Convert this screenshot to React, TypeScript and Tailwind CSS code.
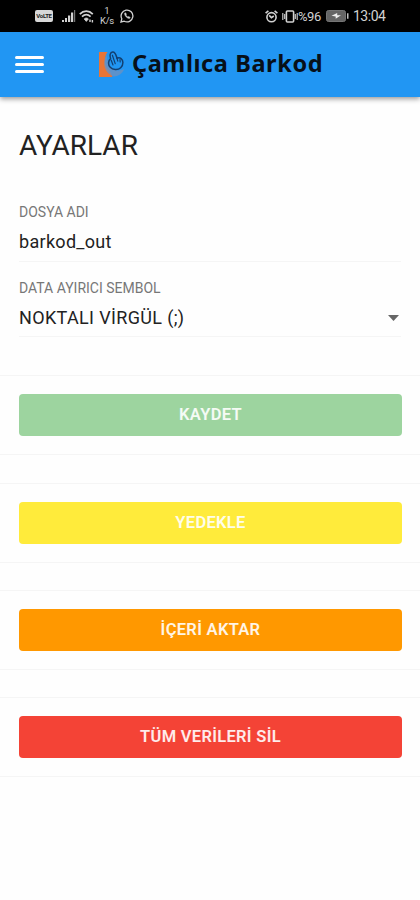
import React from "react";

function StatusBar() {
  return (
    <div className="flex h-8 items-center bg-black pr-[34px] pl-[35px] text-[#d2d2d2]">
      <div className="flex h-[12px] w-[18px] items-center justify-center overflow-hidden rounded-[2px] bg-[#d8d8d8] text-[6px] leading-none font-bold tracking-[-0.3px] text-[#222]">
        VoLTE
      </div>
      <svg className="ml-[9px]" width="14" height="12" viewBox="0 0 14 12" fill="currentColor">
        <rect x="0" y="10" width="2" height="2" />
        <rect x="3" y="8" width="2" height="4" />
        <rect x="6" y="5.5" width="2.2" height="6.5" />
        <rect x="9" y="2.5" width="2.2" height="9.5" />
        <rect x="12" y="0" width="1.2" height="12" opacity="0.55" />
      </svg>
      <svg className="ml-[3px]" width="16" height="13" viewBox="0 0 16 13" fill="none" stroke="currentColor" strokeWidth="1.7">
        <path d="M0.8 4.2C4.6 0.2 10 0.2 13.8 4.2" />
        <path d="M3 6.7C5.8 4 8.8 4 11.6 6.7" />
        <path d="M5.2 8.9C6.6 7.7 8 7.7 9.4 8.9L7.3 11.4Z" fill="currentColor" strokeWidth="0.8" />
        <path d="M11 9.5V12M13.4 10V12.4" strokeWidth="1.4" />
      </svg>
      <div className="ml-[5px] flex w-[14px] flex-col items-center text-[9.5px] leading-[10px]">
        <span>1</span>
        <span className="tracking-[-0.3px]">K/s</span>
      </div>
      <svg className="ml-[6px]" width="14" height="14" viewBox="0 0 14 14" fill="none" stroke="currentColor">
        <path d="M1 13L1.8 9.8A5.9 5.9 0 1 1 4.2 12.2Z" strokeWidth="1.3" />
        <path d="M4.7 4.1C4 5.8 6.7 9.5 9.4 9.6L10.2 8.4L8.7 7.6L7.8 8.1L6 6.2L6.4 5.2L5.6 3.8Z" fill="currentColor" strokeWidth="0.5" />
      </svg>
      <div className="flex-1" />
      <svg width="13" height="13" viewBox="0 0 13 13" fill="none" stroke="currentColor" strokeWidth="1.6">
        <circle cx="6.5" cy="7.2" r="4.6" />
        <path d="M0.6 3.2L3.4 0.8M12.4 3.2L9.6 0.8M4.2 5.4L6.4 7.6L8.8 6" />
      </svg>
      <svg className="ml-[4px]" width="16" height="13" viewBox="0 0 16 13" fill="none" stroke="currentColor" strokeWidth="1.6">
        <rect x="4.4" y="1" width="7.2" height="11" rx="1" />
        <path d="M0.8 3V10M2.7 4V9M13.3 4V9M15.2 3V10" strokeWidth="1.1" />
      </svg>
      <span className="w-[24px] text-[13px] leading-none tracking-[-0.4px] whitespace-nowrap">%96</span>
      <svg className="ml-[4px]" width="23" height="12" viewBox="0 0 23 12">
        <rect x="0.5" y="0.5" width="19" height="11" rx="2" fill="#656565" stroke="#757575" />
        <path d="M21 3.2H22.5V8.8H21Z" fill="#c0c0c0" />
        <path d="M5.5 5.8L11.2 3V5.2H15L9.7 8.7V6.4Z" fill="#eee" />
      </svg>
      <span className="ml-[4px] w-[33px] text-[14px] leading-none tracking-[-0.5px] whitespace-nowrap">13:04</span>
    </div>
  );
}

function Logo() {
  return (
    <svg width="27" height="27" viewBox="0 0 27 27" fill="none">
      <path d="M1 1H9.5C6 6 5.5 15 12 20.5L14.5 26H1Z" fill="#e87536" />
      <path d="M8.5 4C3.5 12 7 23 16 25.5C21 25 25 22 26 18C18 22 10 18 8.5 4Z" fill="#6c91c0" opacity="0.8" />
      <path d="M12.6 7.6C11.6 4.4 12 1.2 14.7 0.9C17.4 0.7 18 3.8 19 7.2C22.2 5.9 24.9 8 24.9 11.6C24.9 15.8 21.6 18.9 17.3 18.6C13 18.3 10.3 15.1 10.6 11.6C10.7 10 11.4 8.6 12.6 7.6Z" stroke="#123f70" strokeWidth="1.5" />
      <path d="M14.4 4.2L17.2 12.6M13.2 9.2L15 14M19 7.2L19.8 10.2M22 8.5L22.2 11" stroke="#123f70" strokeWidth="1.2" strokeLinecap="round" />
    </svg>
  );
}

function Header() {
  return (
    <header className="relative flex h-[65px] items-center bg-[#2196f3] pl-[15px] shadow-[0_2px_5px_rgba(0,0,0,0.4)]">
      <button aria-label="Menü" className="flex w-[29px] flex-col gap-[4px]">
        <span className="h-[3px] rounded-full bg-white" />
        <span className="h-[3px] rounded-full bg-white" />
        <span className="h-[3px] rounded-full bg-white" />
      </button>
      <div className="ml-[54px] flex items-center gap-[7px]">
        <Logo />
        <span className="pb-[3px] font-['Noto_Sans',sans-serif] text-[23.5px] leading-8 font-bold tracking-[0.6px] whitespace-nowrap text-[#071019]">
          Çamlıca Barkod
        </span>
      </div>
    </header>
  );
}

function ActionCard({ label, color }: { label: string; color: string }) {
  return (
    <section className="h-[80px] border-y border-[#f5f5f5] px-[19px] pt-[18px]">
      <button className={`h-[42px] w-[383px] rounded-[4px] text-center text-[16.5px] leading-[42px] font-semibold tracking-[0.3px] text-white/90 ${color}`}>
        {label}
      </button>
    </section>
  );
}

const actions = [
  { label: "KAYDET", color: "bg-[#9dd49f]" },
  { label: "YEDEKLE", color: "bg-[#ffeb3b]" },
  { label: "İÇERİ AKTAR", color: "bg-[#ff9800]" },
  { label: "TÜM VERİLERİ SİL", color: "bg-[#f44336]" },
];

export default function App() {
  return (
    <div className="h-[900px] w-[420px] overflow-hidden bg-[#fefefe] font-['Roboto',sans-serif] text-[#222]">
      <StatusBar />
      <Header />
      <main>
        <h1 className="px-[19px] pt-[31px] text-[28px] leading-9">AYARLAR</h1>
        <div className="mx-[19px] mt-[38px] h-[60px] border-b border-[#f5f5f5]">
          <div className="text-[14px] leading-5 text-[#777]">DOSYA ADI</div>
          <div className="pt-[8px] text-[18px] leading-6 tracking-[0.3px]">barkod_out</div>
        </div>
        <div className="mx-[19px] mt-[15px] h-[60px] border-b border-[#f5f5f5]">
          <div className="pt-px text-[14px] leading-5 text-[#777]">DATA AYIRICI SEMBOL</div>
          <div className="flex items-center justify-between pt-[8px] text-[18px] leading-6">
            <span className="tracking-[0.35px]">NOKTALI VİRGÜL (;)</span>
            <svg className="mr-[2px]" width="11" height="6" viewBox="0 0 11 6">
              <path d="M0 0H11L5.5 6Z" fill="#666" />
            </svg>
          </div>
        </div>
        <div className="mt-[38.4px] flex flex-col gap-[27.3px]">
          {actions.map((a) => (
            <ActionCard key={a.label} label={a.label} color={a.color} />
          ))}
        </div>
      </main>
    </div>
  );
}
